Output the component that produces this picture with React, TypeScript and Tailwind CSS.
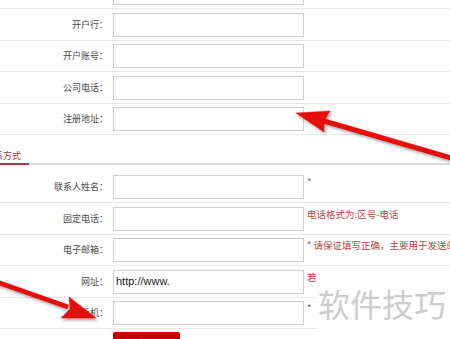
import React from 'react';

const font = { fontFamily: '"Noto Sans CJK SC", "Liberation Sans", sans-serif' };

type Row = { label: string; value?: string; hint?: React.ReactNode };

const bankRows: Row[] = [
  { label: '' },
  { label: '开户行：' },
  { label: '开户账号：' },
  { label: '公司电话：' },
  { label: '注册地址：' },
];

const contactRows: Row[] = [
  { label: '联系人姓名：', hint: '*' },
  { label: '固定电话：', hint: '电话格式为:区号-电话' },
  {
    label: '电子邮箱：',
    hint: (
      <>
        * 请保证填写正确，主要用于发送<span className="text-[#e8701a]">邮件通知</span>
      </>
    ),
  },
  { label: '网址：', value: 'http://www.', hint: '若' },
  { label: '手机：', hint: '*' },
];

const FormRow: React.FC<{ row: Row }> = ({ row }) => (
  <div className="flex items-start h-[31.5px] pt-[3.5px] border-b border-[#e8e8e8]">
    <div className="w-[108px] shrink-0 text-right text-[9px] leading-[24px] text-[#4a4a4a]">{row.label}</div>
    <div className="ml-[5px] w-[191px] h-[24px] shrink-0 border border-[#cfcfcf] bg-white flex items-center pl-[2px]">
      {row.value && (
        <span className="text-[11px] text-[#222]" style={{ fontFamily: '"Liberation Sans", sans-serif' }}>
          {row.value}
        </span>
      )}
    </div>
    {row.hint && (
      <div className="ml-[3px] mt-[1px] text-[9.5px] leading-[12px] whitespace-nowrap text-[#b04848]">{row.hint}</div>
    )}
  </div>
);

const Arrows: React.FC = () => (
  <svg className="absolute left-0 top-0 pointer-events-none" width="450" height="339" viewBox="0 0 450 339">
    <defs>
      <filter id="sh" x="-20%" y="-20%" width="140%" height="140%">
        <feDropShadow dx="1.5" dy="2" stdDeviation="1.5" floodColor="#000" floodOpacity="0.35" />
      </filter>
    </defs>
    <g fill="#e60f0f" stroke="#e60f0f" filter="url(#sh)">
      <line x1="458" y1="160" x2="324" y2="121" strokeWidth="5" />
      <polygon points="296,113 330,111 324,121 324,132" strokeWidth="0.5" />
      <line x1="-6" y1="281" x2="68" y2="307" strokeWidth="5" />
      <polygon points="96,318 69,297 70,309 61,318" strokeWidth="0.5" />
    </g>
  </svg>
);

const App: React.FC = () => {
  return (
    <div className="relative w-[450px] h-[339px] overflow-hidden bg-white" style={font}>
      <div className="mt-[-22.5px]">
        {bankRows.map((r, i) => (
          <FormRow key={i} row={r} />
        ))}

        {/* section header */}
        <div className="h-[30px] flex items-end border-b-2 border-[#dcdcdc]">
          <span className="-mb-[2px] -ml-[15px] pr-[8px] pb-[1px] text-[9px] leading-[12px] text-[#a83a3a] border-b-2 border-[#a83a3a]">
            联系方式
          </span>
        </div>
        <div className="h-[6.5px]" />

        {contactRows.map((r, i) => (
          <FormRow key={i} row={r} />
        ))}

        <div className="pl-[113px]">
          <button className="w-[67px] h-[22px] bg-[#c40505] text-white text-[10px] pt-[2px] rounded-[2px]">提交保存</button>
        </div>
      </div>

      {/* watermark */}
      <div className="absolute left-[317px] top-[269px] w-[136px] h-[64px] bg-white flex items-center pt-[4px] pl-[1px]">
        <span className="text-[32px] leading-none text-[#cdcdcd]">软件技巧</span>
      </div>

      <Arrows />
    </div>
  );
};

export default App;
